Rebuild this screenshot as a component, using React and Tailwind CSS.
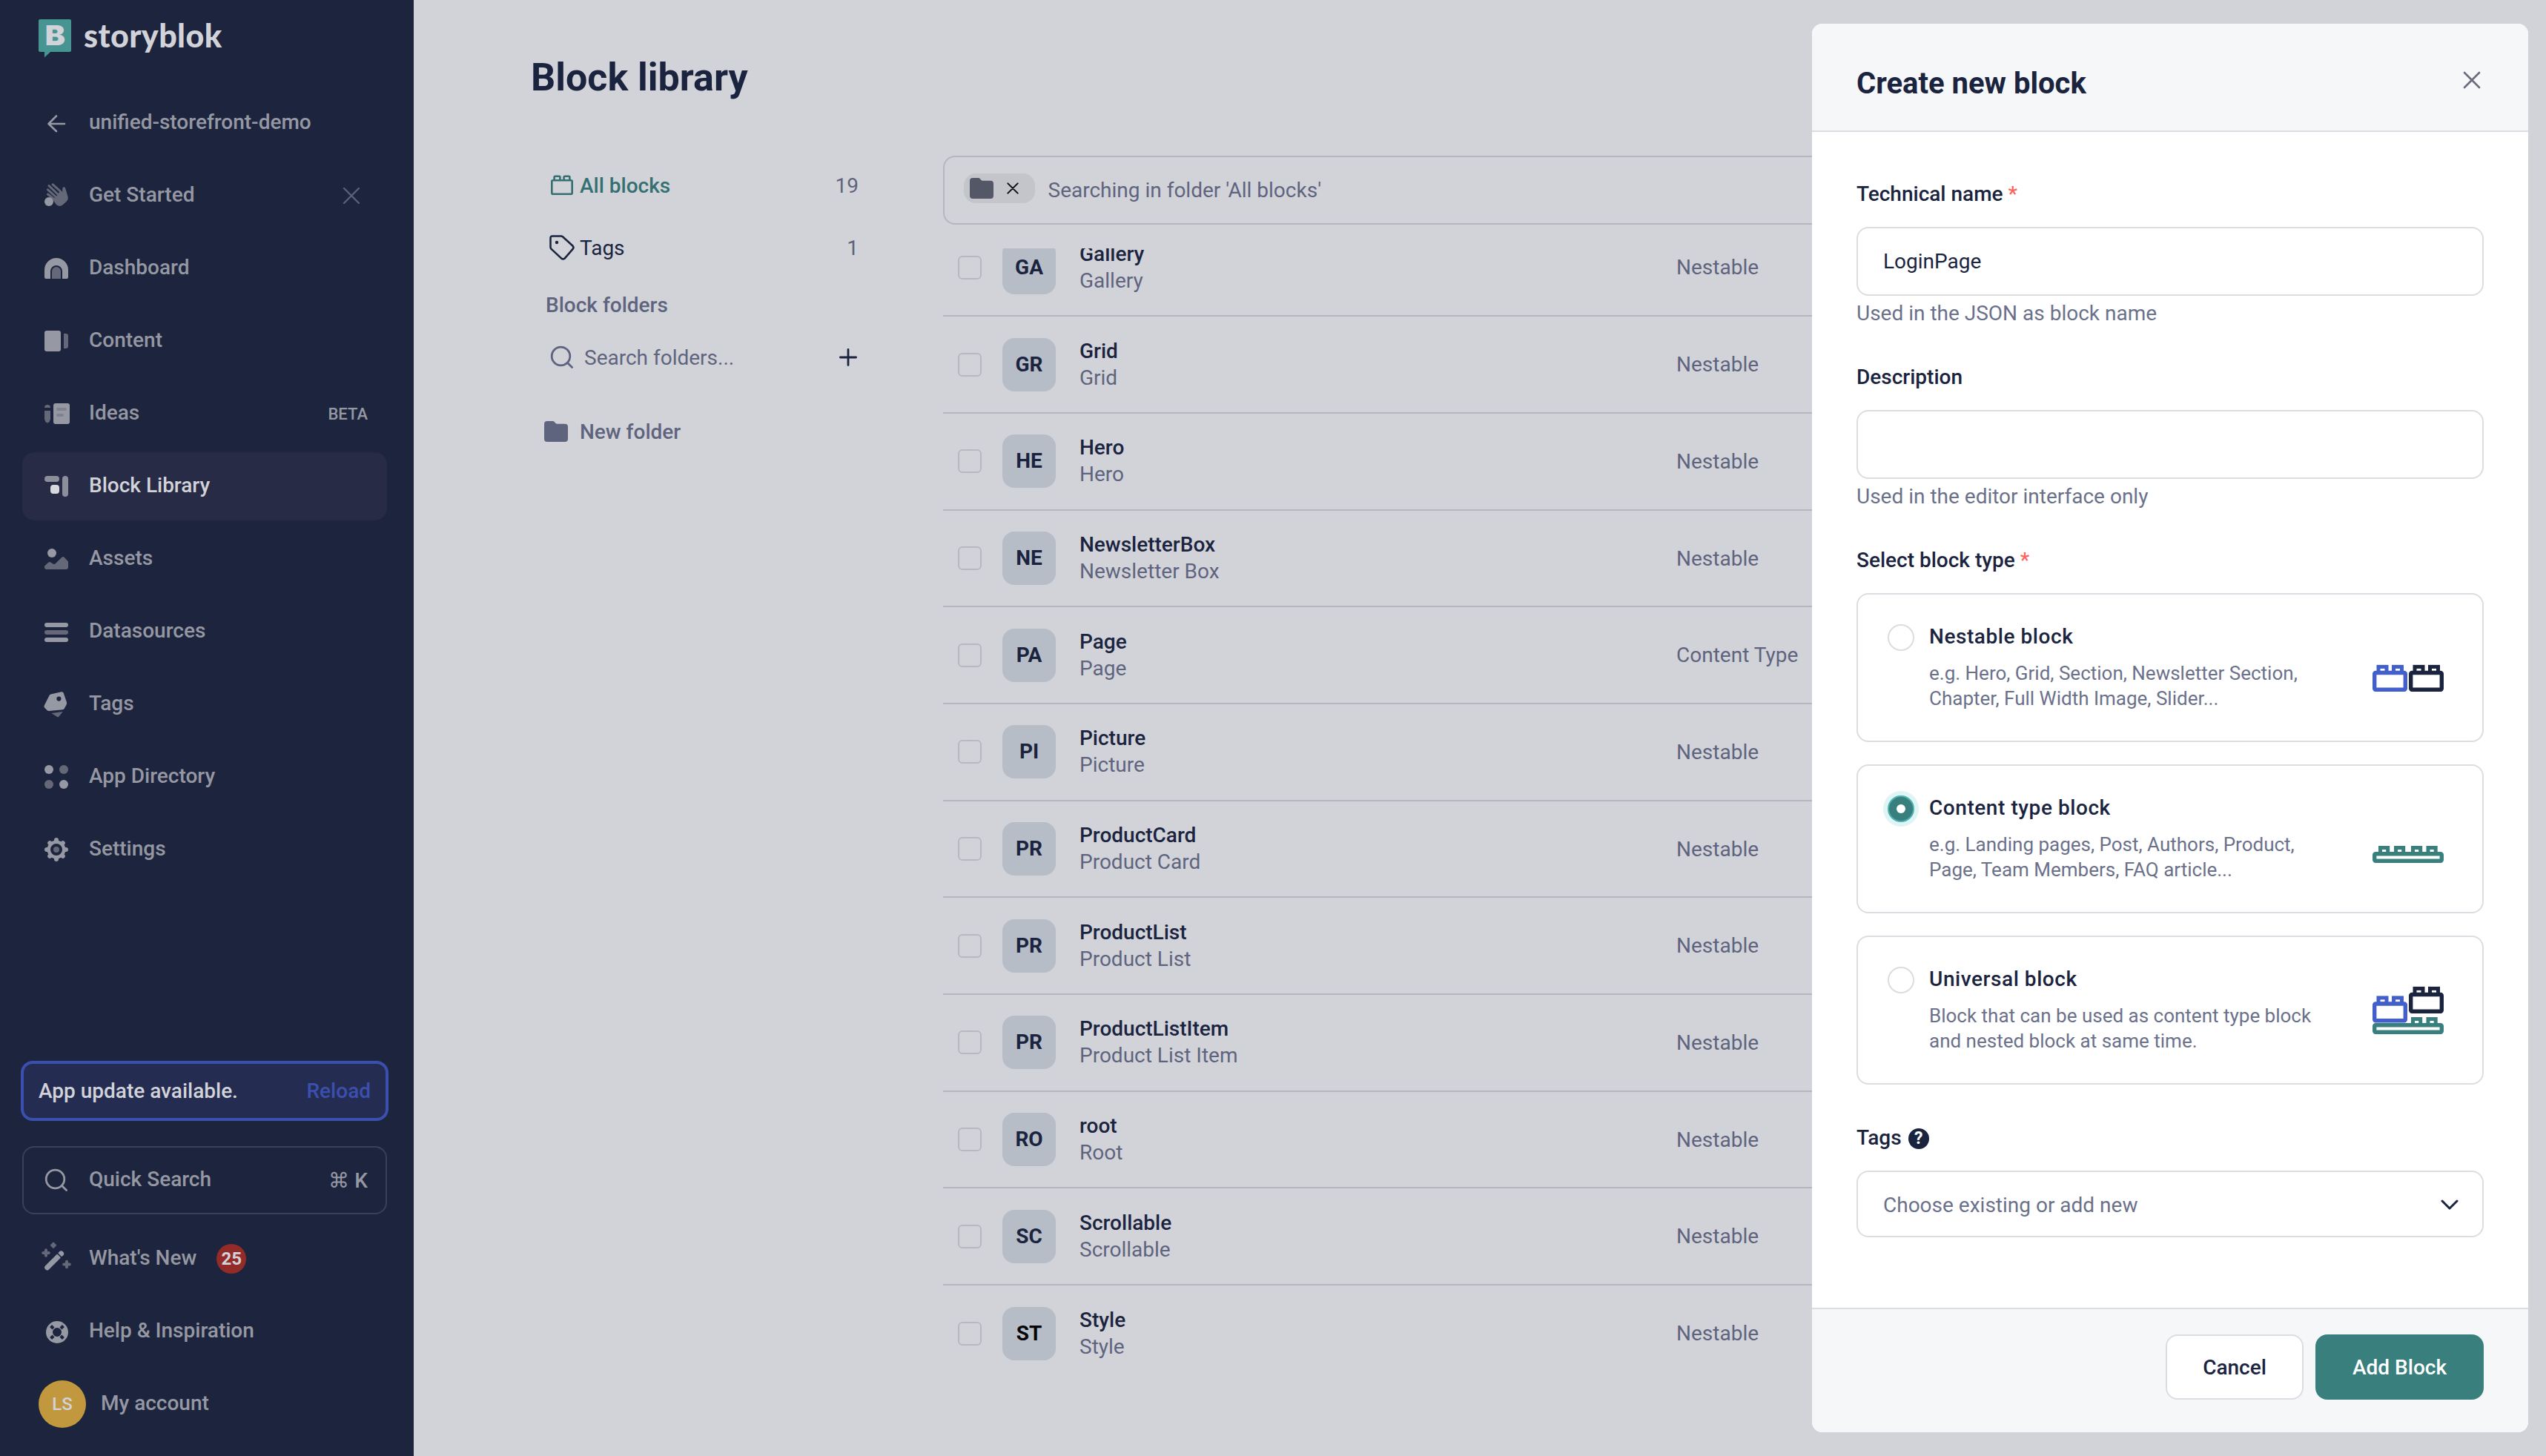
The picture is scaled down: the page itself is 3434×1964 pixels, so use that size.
import React from "react";

const LIGHT = "#9699a4";
const DIM = "#646878";

function NavIcon({ children }) {
  return (
    <svg viewBox="0 0 36 36" fill={LIGHT} className="size-9 shrink-0 overflow-visible">
      {children}
    </svg>
  );
}

const BackIcon = () => (
  <NavIcon>
    <path d="M29 19H8M18 8.500 7.500 19 18 29" fill="none" stroke={LIGHT} strokeWidth="2.600" strokeLinecap="round" strokeLinejoin="round" />
  </NavIcon>
);

const WaveIcon = () => (
  <NavIcon>
    <g stroke={DIM} strokeWidth="3" strokeLinecap="round">
      <path d="M13.200 2.800 25 13.500M8 4.500 22 18M6.500 9.800 19 21M6.500 16 17 24" />
    </g>
    <path
      d="M23 11.500 26.300 14 26.200 9C26.300 5.800 29.300 5.200 30.200 8L33.600 19.500C34 22 33.400 24 31.600 25.800L26.500 30.500C23.500 32.700 20 32.200 17.500 29.500L13 23 18 19Z"
      fill={DIM}
    />
    <circle cx="8" cy="26" r="6" />
  </NavIcon>
);

const DashboardIcon = () => (
  <NavIcon>
    <path d="M2 20A16 16 0 0 1 34 20V30A2 2 0 0 1 32 32H26V22A8 8 0 0 0 10 22V32H4A2 2 0 0 1 2 30Z" />
    <path d="M12 32V22A6 6 0 0 1 24 22V32Z" fill={DIM} />
  </NavIcon>
);

const ContentIcon = () => (
  <NavIcon>
    <rect x="2" y="4" width="22" height="28" rx="3" />
    <path d="M28 8H31A3 3 0 0 1 34 11V25A3 3 0 0 1 31 28H28Z" fill={DIM} />
  </NavIcon>
);

const IdeasIcon = () => (
  <NavIcon>
    <path d="M2 10A4 4 0 0 1 10 10Z" fill={DIM} />
    <path d="M2 14H10V25Q9 30 6 30.500Q3 30 2 25Z" fill={DIM} />
    <rect x="14" y="4" width="22" height="28" rx="3" />
    <rect x="18" y="10" width="14" height="4" rx="2" fill="#80838f" />
    <rect x="18" y="18" width="10" height="4" rx="2" fill="#80838f" />
  </NavIcon>
);

const LibraryIcon = () => (
  <NavIcon>
    <rect x="2" y="4" width="20" height="8" rx="4" fill="#8b8e9b" />
    <rect x="26" y="4" width="8" height="28" rx="4" fill="#8b8e9b" />
    <rect x="10" y="16" width="12" height="12" rx="4" fill="#d7d8dd" />
  </NavIcon>
);

const AssetsIcon = () => (
  <NavIcon>
    <circle cx="12" cy="10" r="6" />
    <path d="M2 27.500 7.200 22.800Q8.800 21.200 10.400 22.400L13.400 24.600Q15 25.600 16.400 24.400L25.600 15.600Q27 14.400 28.400 15.600L34 21.400V29A3 3 0 0 1 31 32H5A3 3 0 0 1 2 29Z" fill={DIM} />
  </NavIcon>
);

const DatasourcesIcon = () => (
  <NavIcon>
    <rect x="2" y="6" width="32" height="6" rx="3" />
    <rect x="2" y="16" width="32" height="6" rx="3" fill={DIM} />
    <rect x="2" y="26" width="32" height="6" rx="3" />
  </NavIcon>
);

const TagsNavIcon = () => (
  <NavIcon>
    <path
      fillRule="evenodd"
      d="M10.500 4.600 24.500 1.300Q27 .8 27.800 3L32 15.500Q32.400 17.200 31.600 18.600L28.800 23.800Q28 25 26.600 25.200L8 27Q6.500 27 5.400 26L2 22.600Q.9 21.200 1.800 19.600L8.600 6Q9.200 5 10.500 4.600ZM21.400 7.500A3.100 3.100 0 1 0 21.400 13.700A3.100 3.100 0 1 0 21.400 7.500Z"
    />
    <path d="M11.300 30 26.700 28 21.300 34.700Q20.300 35.600 19.200 34.900Z" fill={DIM} />
  </NavIcon>
);

const AppsIcon = () => (
  <NavIcon>
    <circle cx="8" cy="8" r="6" />
    <circle cx="28" cy="8" r="6" fill={DIM} />
    <circle cx="8" cy="28" r="6" fill={DIM} />
    <circle cx="28" cy="28" r="6" />
  </NavIcon>
);

const SettingsIcon = () => (
  <NavIcon>
    <circle cx="18" cy="18" r="10.200" fill="none" stroke={LIGHT} strokeWidth="4.400" />
    <g stroke={LIGHT} strokeWidth="6" strokeLinecap="round">
      <path d="M18 5V7M18 29V31M5 18H7M29 18H31M9.200 9.200 10.200 10.200M25.800 25.800 26.800 26.800M9.200 26.800 10.200 25.800M25.800 10.200 26.800 9.200" />
    </g>
    <circle cx="18" cy="18" r="4" fill={DIM} />
  </NavIcon>
);

const SearchIcon = ({ className }) => (
  <svg viewBox="0 0 36 36" fill="none" stroke="currentColor" strokeWidth="2.800" strokeLinecap="round" className={className}>
    <circle cx="16.500" cy="16.500" r="12.300" />
    <path d="M25.500 25.500 31.600 31.600" />
  </svg>
);

const PlusShape = ({ x, y, s }) => (
  <path transform={`translate(${x} ${y})`} d={`M0 ${-s}V${s}M${-s} 0H${s}`} stroke={DIM} strokeWidth="4" strokeLinecap="round" />
);

const WandIcon = () => (
  <NavIcon>
    <PlusShape x={14} y={-0.300} s={2} />
    <PlusShape x={4} y={10} s={3.800} />
    <PlusShape x={32} y={25.500} s={3.800} />
    <path d="M5.700 29.800 20.500 15" stroke={LIGHT} strokeWidth="7" strokeLinecap="round" />
    <path d="M24 11.500 24.400 11.100" stroke={LIGHT} strokeWidth="7.400" strokeLinecap="round" />
    <path d="M18.600 9.800 26.200 17.400" stroke="#1d243d" strokeWidth="1.500" />
  </NavIcon>
);

const LifebuoyIcon = () => (
  <NavIcon>
    <g transform="translate(1 1)">
      <circle cx="18" cy="18" r="10.500" fill="none" stroke={LIGHT} strokeWidth="9" />
      <g stroke="#1d243d" strokeWidth="4.200">
        <path d="M13 13 9.600 9.600M23 13 26.400 9.600M13 23 9.600 26.400M23 23 26.400 26.400" />
      </g>
    </g>
  </NavIcon>
);

const Folder = ({ className }) => (
  <svg viewBox="0 0 32 28" fill="currentColor" className={className}>
    <path d="M4 0H11.500Q13 0 14 1.200L15.500 3Q16.200 3.800 17.400 3.800H28A4 4 0 0 1 32 7.800V24A4 4 0 0 1 28 28H4A4 4 0 0 1 0 24V4A4 4 0 0 1 4 0Z" />
  </svg>
);

const Cross = ({ className, w }) => (
  <svg viewBox="0 0 24 24" fill="none" stroke="currentColor" strokeWidth={w} strokeLinecap="round" className={className}>
    <path d="M2 2 22 22M22 2 2 22" />
  </svg>
);

function NavItem({ icon, label, active, right, badge }) {
  return (
    <div
      className={
        active
          ? "flex h-[92px] items-center rounded-[16px] bg-[#272b45] pl-7 pr-[26px] text-[#d2d3d9]"
          : "flex h-[92px] items-center rounded-[16px] pl-7 pr-[26px] text-[#9598a3]"
      }
    >
      {icon}
      <span className="ml-[26px] pb-1 font-medium">{label}</span>
      {badge && (
        <span className="ml-[27px] flex size-10 items-center justify-center rounded-full bg-[#932c29] text-[24px] font-bold text-[#d2d3d9]">{badge}</span>
      )}
      {right && <span className="ml-auto flex">{right}</span>}
    </div>
  );
}

function Sidebar() {
  return (
    <aside className="flex h-full w-[558px] shrink-0 flex-col bg-[#1d243d] pl-[30px] pr-9 pb-6">
      <div className="flex h-[120px] items-start pl-[22px] pt-[26px]">
        <div className="flex w-11 flex-col">
          <div className="flex h-11 items-center justify-center rounded-[2px] bg-[#469593] font-[Inter] text-[37px] leading-[44px] font-black text-[#d2d3d9]">
            <span className="scale-x-110">B</span>
          </div>
          <svg viewBox="0 0 44 8" className="h-2 w-11">
            <path d="M8 0H16L8 7.500Z" fill="#469593" />
          </svg>
        </div>
        <span className="ml-[17px] font-[Lato] text-[43px] leading-[44px] font-black tracking-[0.010em] text-[#d2d3d9]">storyblok</span>
      </div>
      <nav className="flex flex-col gap-[6px]">
        <NavItem icon={<BackIcon />} label="unified-storefront-demo" />
        <NavItem icon={<WaveIcon />} label="Get Started" right={<Cross w="2.400" className="mr-2.5 size-6 text-[#5b6079]" />} />
        <NavItem icon={<DashboardIcon />} label="Dashboard" />
        <NavItem icon={<ContentIcon />} label="Content" />
        <NavItem icon={<IdeasIcon />} label="Ideas" right={<span className="text-[22px] font-medium">BETA</span>} />
        <NavItem icon={<LibraryIcon />} label="Block Library" active />
        <NavItem icon={<AssetsIcon />} label="Assets" />
        <NavItem icon={<DatasourcesIcon />} label="Datasources" />
        <NavItem icon={<TagsNavIcon />} label="Tags" />
        <NavItem icon={<AppsIcon />} label="App Directory" />
        <NavItem icon={<SettingsIcon />} label="Settings" />
      </nav>
      <div className="mt-auto flex flex-col">
        <div className="-mx-0.5 flex h-[81px] items-center justify-between rounded-[16px] border-4 border-[#3b50ae] bg-[#242c52] pl-5 pr-5 font-medium text-[#d2d3d9]">
          <span>App update available.</span>
          <span className="text-[#3b50ae]">Reload</span>
        </div>
        <div className="mt-[34px] flex h-[92px] items-center rounded-[16px] border-2 border-[#3b4059] pl-[26px] pr-6 font-medium text-[#9598a3]">
          <SearchIcon className="size-9" />
          <span className="ml-[26px] pb-1">Quick Search</span>
          <span className="ml-auto">⌘ K</span>
        </div>
        <div className="mt-[14px] flex flex-col gap-[6px]">
          <NavItem icon={<WandIcon />} label="What's New" badge="25" />
          <NavItem icon={<LifebuoyIcon />} label="Help & Inspiration" />
          <div className="flex h-[92px] items-center pl-[22px] font-medium text-[#9598a3]">
            <span className="flex size-16 items-center justify-center rounded-full bg-[#c2983f] text-[24px] text-[#d2d3d9]">LS</span>
            <span className="ml-5 pb-[3px]">My account</span>
          </div>
        </div>
      </div>
    </aside>
  );
}

const BLOCKS = [
  ["GA", "Gallery", "Gallery", "Nestable"],
  ["GR", "Grid", "Grid", "Nestable"],
  ["HE", "Hero", "Hero", "Nestable"],
  ["NE", "NewsletterBox", "Newsletter Box", "Nestable"],
  ["PA", "Page", "Page", "Content Type"],
  ["PI", "Picture", "Picture", "Nestable"],
  ["PR", "ProductCard", "Product Card", "Nestable"],
  ["PR", "ProductList", "Product List", "Nestable"],
  ["PR", "ProductListItem", "Product List Item", "Nestable"],
  ["RO", "root", "Root", "Nestable"],
  ["SC", "Scrollable", "Scrollable", "Nestable"],
  ["ST", "Style", "Style", "Nestable"],
];

function Folders() {
  return (
    <div className="w-[556px] shrink-0">
      <div className="flex h-[84px] w-[442px] items-center pl-[27px] font-medium text-[#347071]">
        <svg viewBox="0 0 30 28" fill="none" stroke="currentColor" strokeWidth="2.600" className="h-7 w-[30px]">
          <rect x="1.300" y="7.200" width="27.400" height="18.600" rx="1.500" />
          <path d="M4.600 7V3Q4.600 1.800 5.800 1.800H11.200Q12.400 1.800 12.400 3V7M17.600 7V3Q17.600 1.800 18.800 1.800H24.200Q25.400 1.800 25.400 3V7" />
        </svg>
        <span className="ml-[9px]">All blocks</span>
        <span className="ml-auto font-normal text-[#5f647e]">19</span>
      </div>
      <div className="flex h-[84px] w-[442px] items-center pl-[25px] text-[#1b243f]">
        <svg viewBox="0 0 34 34" fill="none" stroke="currentColor" strokeWidth="2.600" strokeLinejoin="round" className="size-[34px]">
          <path d="M4 1.500H15.500Q17 1.500 18.200 2.500L31.600 14.800Q33.400 16.800 31.600 18.900L20.600 31.600Q18.400 33.200 16.300 31.600L2.600 18.900Q1.500 17.700 1.500 16.200V4Q1.500 1.500 4 1.500Z" />
          <circle cx="10" cy="10" r="1.500" fill="currentColor" strokeWidth="1.400" />
        </svg>
        <span className="ml-[7px]">Tags</span>
        <span className="ml-auto text-[#5f647e]">1</span>
      </div>
      <div className="flex h-[70px] items-center pl-5 font-medium text-[#5f647e]">Block folders</div>
      <div className="flex h-[72px] w-[442px] items-center pl-[24px] text-[#5f647e]">
        <SearchIcon className="size-9" />
        <span className="ml-[12px]">Search folders...</span>
        <svg viewBox="0 0 24 24" className="ml-auto mr-0.5 size-6 text-[#1b243f]" fill="none" stroke="currentColor" strokeWidth="2.800" strokeLinecap="round">
          <path d="M12 1.400V22.600M1.400 12H22.600" />
        </svg>
      </div>
      <div className="mt-7 flex h-[72px] items-center pl-[18px] font-medium text-[#5f647e]">
        <Folder className="h-7 w-8" />
        <span className="ml-4">New folder</span>
      </div>
    </div>
  );
}

function BlockRow({ block: [code, name, title, type] }) {
  return (
    <div className="group flex h-[130.700px] items-center border-b-2 border-[#b4b6c0] pl-5 last:h-[128.700px] last:border-b-0">
      <span className="size-8 rounded-[6px] border-2 border-[#b7b9c2]" />
      <span className="ml-7 flex size-[72px] items-center justify-center rounded-[16px] bg-[#b7bdc7] pb-px font-bold text-[#1b243f] group-last:text-[#060608]">{code}</span>
      <span className="ml-8 flex w-[805px] flex-col leading-9">
        <span className="font-medium text-[#1b243f]">{name}</span>
        <span className="text-[#5f647e]">{title}</span>
      </span>
      <span className="text-[#5f647e]">{type}</span>
    </div>
  );
}

function Library() {
  return (
    <main className="h-full min-w-0 flex-1 overflow-hidden pl-[158px] pr-[158px]">
      <div className="flex h-[208px] items-start pt-[74px]">
        <h1 className="text-[52px] leading-[61px] font-bold text-[#1b243f]">Block library</h1>
      </div>
      <div className="flex">
        <Folders />
        <div className="min-w-0 flex-1 pt-0.5">
          <div className="flex h-[93px] items-center rounded-[16px] border-2 border-[#b4b6c0] pl-[26px]">
            <span className="mb-[5px] flex h-10 w-24 items-center rounded-[16px] bg-[#c4c5ca] pl-2">
              <Folder className="h-7 w-8 text-[#535766]" />
              <Cross w="3" className="ml-[18px] size-[16px] text-[#111]" />
            </span>
            <span className="ml-[17.500px]">
              <span className="text-[#5f647e]">Searching in folder 'All blocks'</span>
            </span>
          </div>
          <div className="mt-8 overflow-hidden">
            <div className="-mt-[38.400px]">
              {BLOCKS.map((b, i) => (
                <BlockRow key={i} block={b} />
              ))}
            </div>
          </div>
        </div>
      </div>
    </main>
  );
}

const Brick = ({ x, y, color }) => (
  <g transform={`translate(${x} ${y})`} stroke={color} fill="#fff">
    <rect x="8" y="2.400" width="11" height="8" strokeWidth="5" />
    <rect x="28.500" y="2.400" width="11" height="8" strokeWidth="5" />
    <rect x="2.700" y="10.500" width="41.600" height="22.800" rx="1.500" strokeWidth="5.400" />
  </g>
);

const Plate = ({ studs }) => (
  <g stroke="#387f7e" fill="#fff">
    {studs.map((x) => (
      <rect key={x} x={x + 2.500} y="43.500" width="10.200" height="8" strokeWidth="5" />
    ))}
    <rect x="2.700" y="51.700" width="90.600" height="9.600" rx="1.500" strokeWidth="5.400" />
  </g>
);

const BLUE = "#425fcb";
const NAVY = "#1b243f";

const TYPES = [
  {
    title: "Nestable block",
    lines: ["e.g. Hero, Grid, Section, Newsletter Section,", "Chapter, Full Width Image, Slider..."],
    art: (
      <>
        <Brick x={0} y={28} color={BLUE} />
        <Brick x={49} y={28} color={NAVY} />
      </>
    ),
  },
  {
    title: "Content type block",
    lines: ["e.g. Landing pages, Post, Authors, Product,", "Page, Team Members, FAQ article..."],
    checked: true,
    art: <Plate studs={[8, 29, 52, 72.500]} />,
  },
  {
    title: "Universal block",
    lines: ["Block that can be used as content type block", "and nested block at same time."],
    art: (
      <>
        <Plate studs={[52, 72.500]} />
        <Brick x={0} y={12.500} color={BLUE} />
        <Brick x={49} y={0} color={NAVY} />
      </>
    ),
  },
];

function TypeCard({ type }) {
  return (
    <div className="flex h-[201px] rounded-[16px] border-2 border-[#dcdde2] pl-10 pr-[52px]">
      {type.checked ? (
        <span className="mt-10 flex size-9 shrink-0 items-center justify-center rounded-full border-2 border-[#4bb0af] bg-[#387f7e] ring-6 ring-[#dff4f4]">
          <span className="size-3 rounded-full bg-white" />
        </span>
      ) : (
        <span className="mt-10 size-9 shrink-0 rounded-full border-2 border-[#dcdde2]" />
      )}
      <div className="ml-5 mt-[37px]">
        <div className="leading-10 font-medium tracking-[0.020em] text-[#1b243f]">{type.title}</div>
        <p className="mt-3 text-[26px] leading-[34px] text-[#6b718a]">
          {type.lines[0]}
          <br />
          {type.lines[1]}
        </p>
      </div>
      <svg viewBox="0 0 96 64" className="ml-auto mt-[67px] h-16 w-24 shrink-0 overflow-visible">
        {type.art}
      </svg>
    </div>
  );
}

const Label = ({ children }) => <div className="flex items-center pt-px leading-[39px] font-medium text-[#1b243f]">{children}</div>;
const Star = () => <span className="ml-[7px] text-[#ff6159]">*</span>;

function CreatePanel() {
  return (
    <section className="absolute right-6 top-8 flex h-[1900px] w-[966px] flex-col overflow-hidden rounded-[14px] bg-white">
      <header className="flex h-[146px] items-center justify-between border-b-2 border-[#dcdde2] bg-[#f6f7f9] px-[60px]">
        <h2 className="pt-4 text-[40px] leading-[47px] font-bold text-[#1b243f]">Create new block</h2>
        <Cross w="2.600" className="mr-1 mt-2 size-6 text-[#6a6b7c]" />
      </header>
      <div className="flex flex-1 flex-col px-[60px] pt-[63px]">
        <Label>
          Technical name
          <Star />
        </Label>
        <div className="mt-[25px] flex h-[93px] items-center rounded-[16px] border-2 border-[#dcdde2] pl-[34px] text-[#1b243f]">LoginPage</div>
        <div className="mt-1 leading-10 text-[#6b718a]">Used in the JSON as block name</div>
        <div className="h-[45px]" />
        <Label>Description</Label>
        <div className="mt-[25px] h-[93px] rounded-[16px] border-2 border-[#dcdde2]" />
        <div className="mt-1 leading-10 text-[#6b718a]">Used in the editor interface only</div>
        <div className="h-[45px]" />
        <Label>
          Select block type
          <Star />
        </Label>
        <div className="mt-[25px] flex flex-col gap-[30px]">
          {TYPES.map((t) => (
            <TypeCard key={t.title} type={t} />
          ))}
        </div>
        <div className="h-[51px]" />
        <Label>
          Tags
          <span className="ml-[9px] mt-0.5 flex size-7 items-center justify-center rounded-full bg-[#1b243f] text-[23px] leading-7 font-bold text-white">?</span>
        </Label>
        <div className="mt-[25px] flex h-[90px] items-center justify-between rounded-[16px] border-2 border-[#dcdde2] pl-[34px] pr-8 text-[#6b718a]">
          <span className="pt-0.5">Choose existing or add new</span>
          <svg viewBox="0 0 24 14" fill="none" stroke="#1b243f" strokeWidth="3" strokeLinecap="round" strokeLinejoin="round" className="mt-0.5 h-3.5 w-6">
            <path d="M2 2 12 12 22 2" />
          </svg>
        </div>
      </div>
      <footer className="flex h-[168px] items-start justify-end gap-4 border-t-2 border-[#dcdde2] bg-[#f6f7f9] px-[60px] pt-[34px] font-medium">
        <button className="h-[88px] w-[186px] rounded-[16px] border-2 border-[#dcdde2] bg-white text-[#1b243f]">Cancel</button>
        <button className="h-[88px] w-[227px] rounded-[16px] bg-[#387f7e] text-white">Add Block</button>
      </footer>
    </section>
  );
}

export default function App() {
  return (
    <div className="relative flex h-[1964px] w-[3434px] overflow-hidden bg-[#d2d3d9] font-[Roboto,sans-serif] text-[28px] leading-[33px]">
      <Sidebar />
      <Library />
      <CreatePanel />
    </div>
  );
}
